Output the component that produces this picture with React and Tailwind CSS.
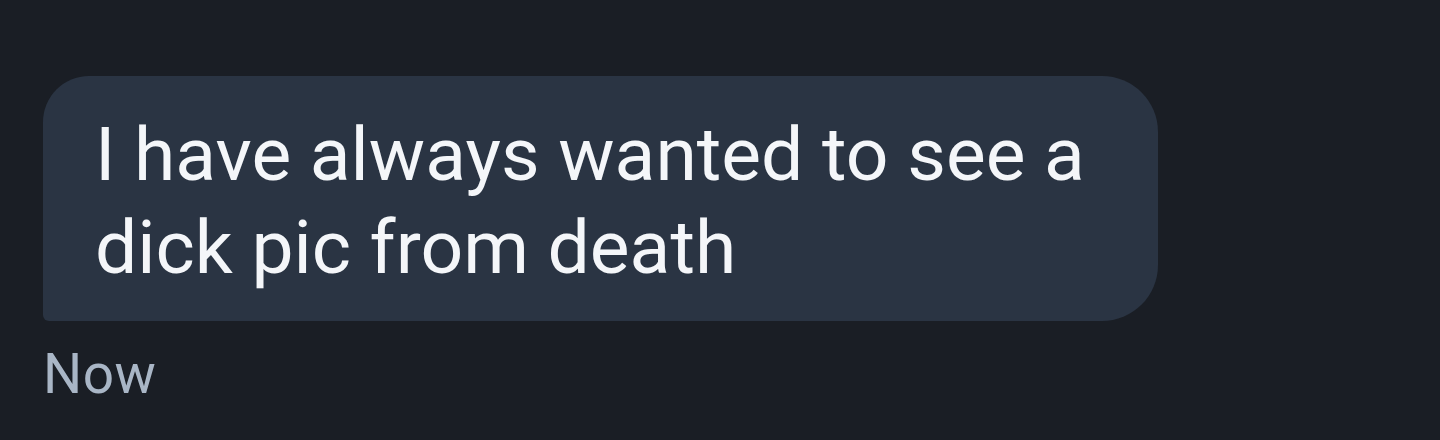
export default function App() {
  return (
    <div className="h-[440px] w-[1440px] bg-[#1a1e25] pl-[43px] pt-[76px] font-['Roboto',sans-serif]">
      <div className="w-[1115px] rounded-tl-[46px] rounded-tr-[56px] rounded-br-[56px] rounded-bl-[6px] bg-[#2a3443] pb-[27px] pl-[52px] pt-[32px]">
        <p className="text-[75px] leading-[93px] text-[#f4f6f9]">
          I have always wanted to see a
          <br />
          dick pic from death
        </p>
      </div>
      <p className="mt-[23px] text-[55px] leading-[60px] tracking-[0.5px] text-[#a9b6c6]">Now</p>
    </div>
  );
}
